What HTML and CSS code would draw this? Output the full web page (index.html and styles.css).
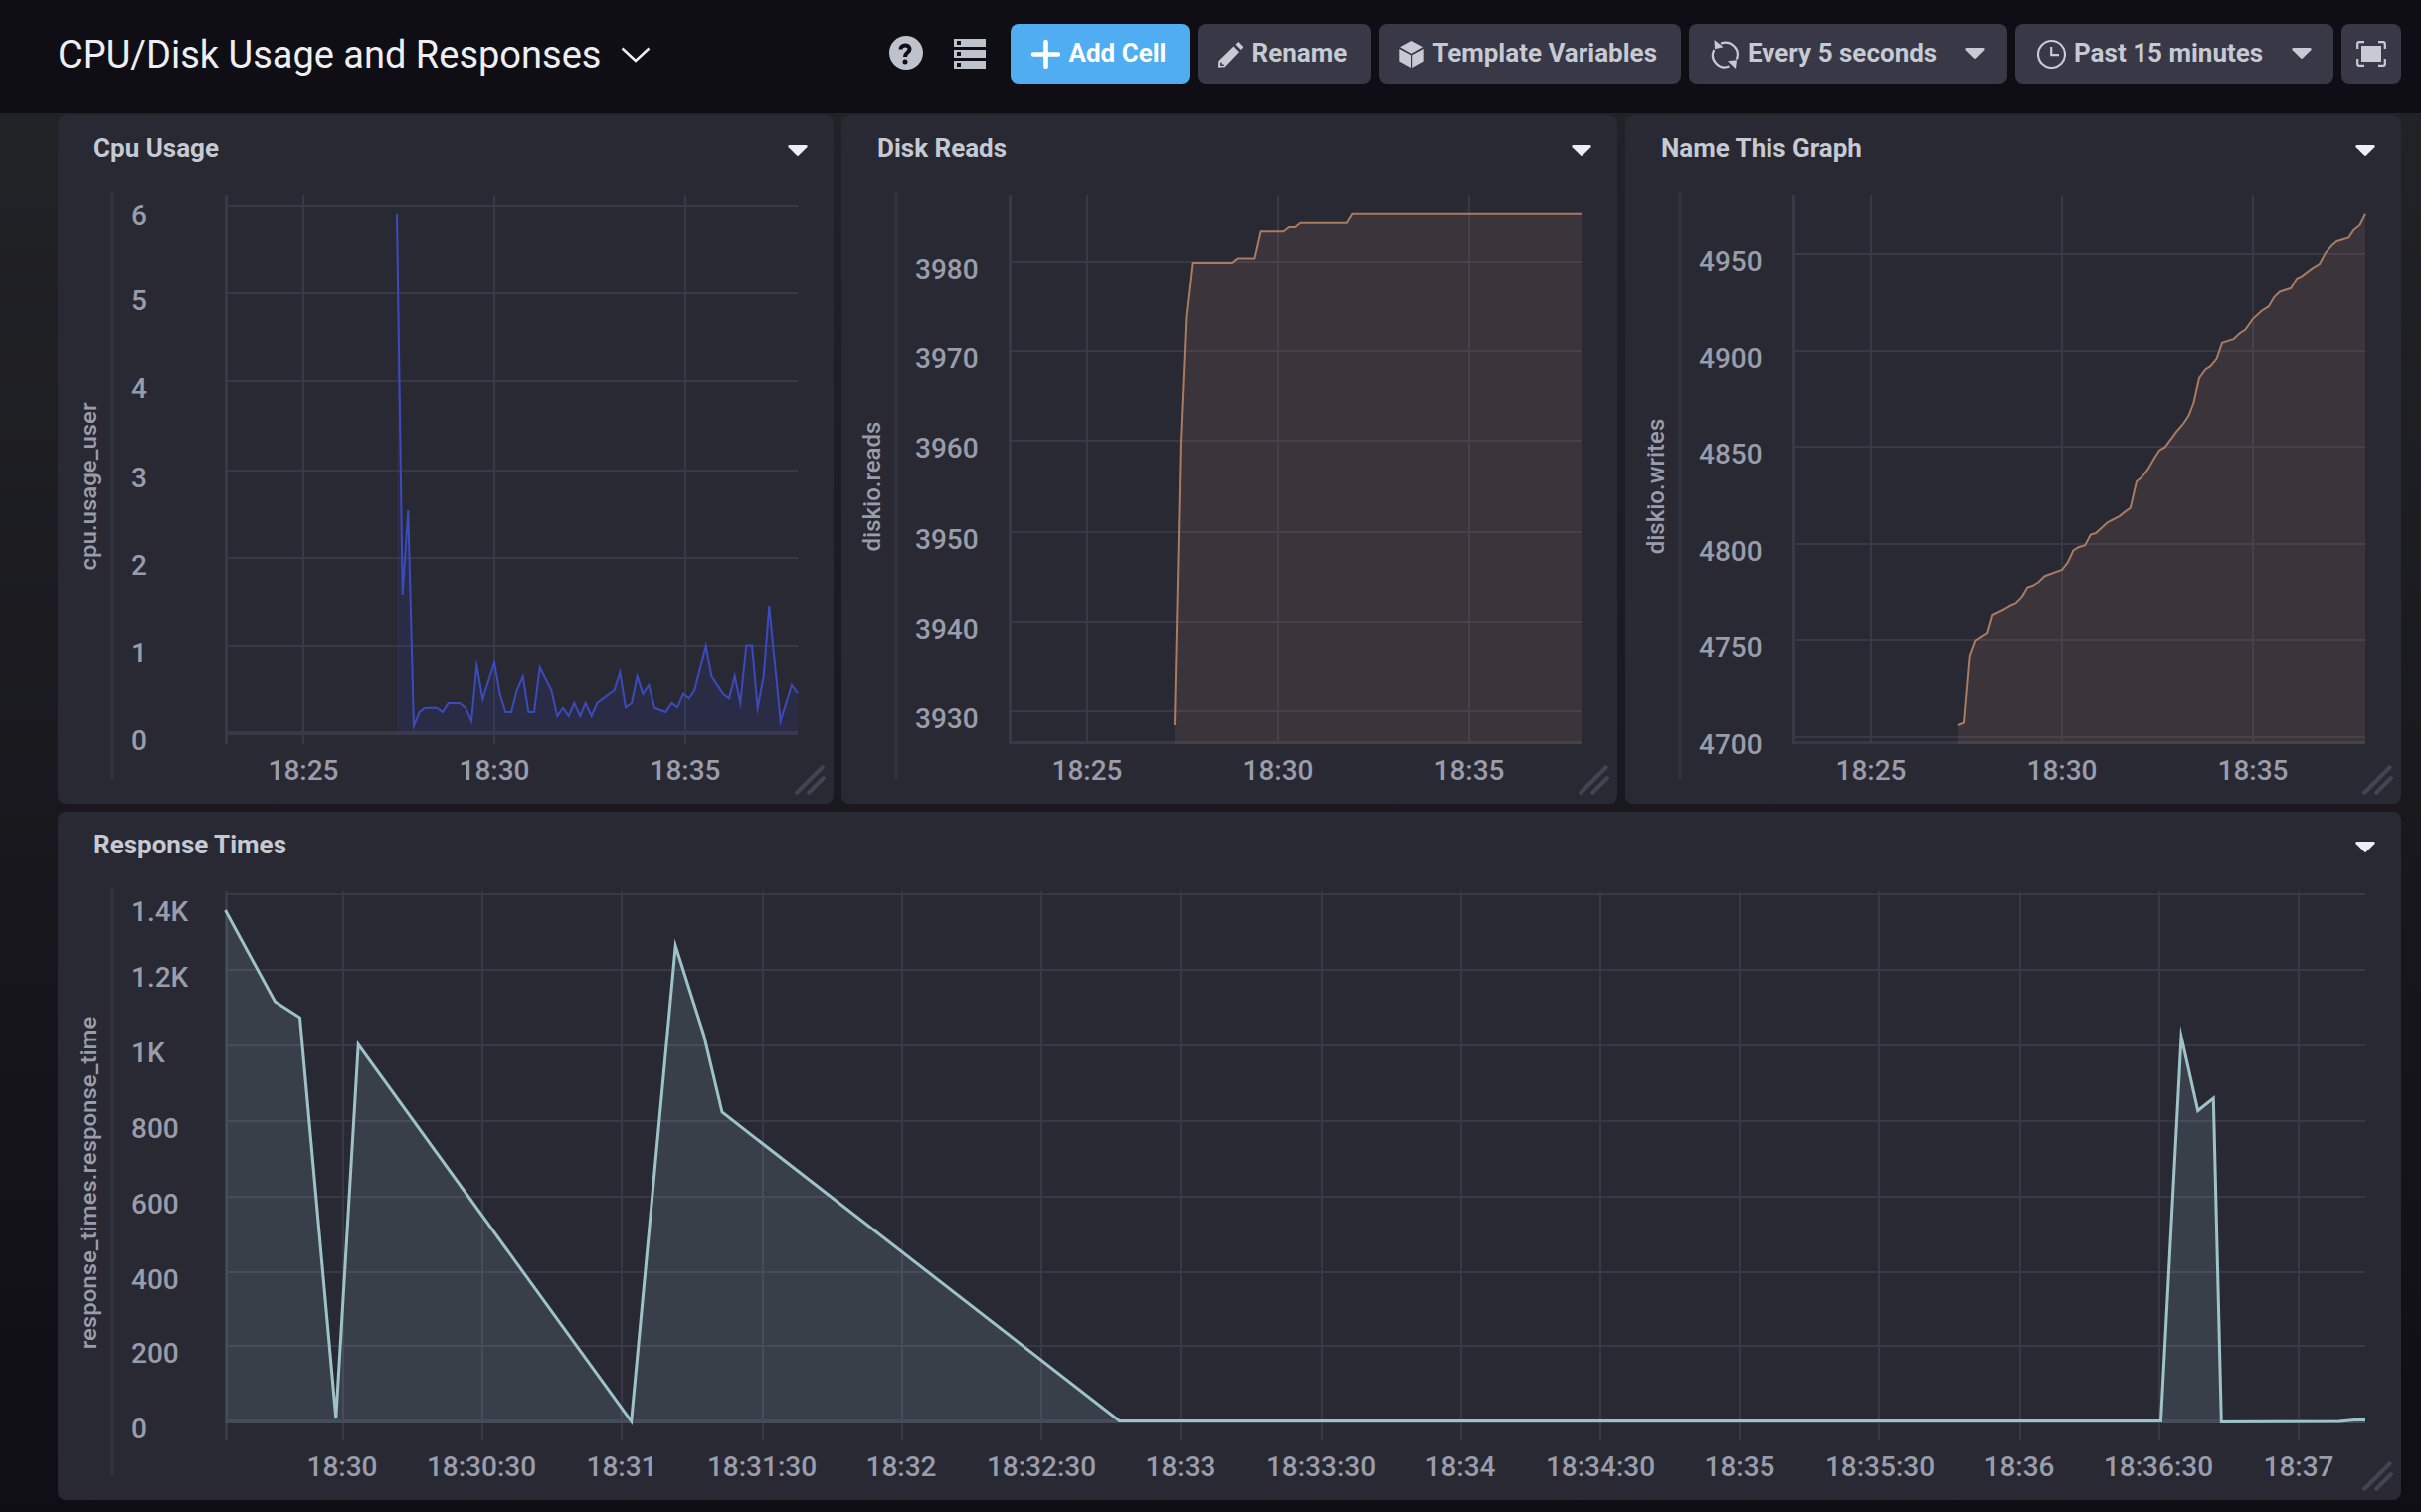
FILE: index.html
```html
<!DOCTYPE html>
<html lang="en">
<head>
<meta charset="utf-8">
<title>CPU/Disk Usage and Responses</title>
<link rel="stylesheet" href="styles.css">
</head>
<body>
<header class="page-header">
  <h1 class="dashboard-name"><button type="button" class="switcher" aria-haspopup="menu">CPU/Disk Usage and Responses
    <svg class="chevron" viewBox="0 0 30 16" aria-hidden="true"><path d="M1.500 1.500 15 14 28.500 1.500"/></svg></button></h1>
  <div class="controls">
    <button type="button" class="icon-button" aria-label="Help">
      <svg width="34" height="34" viewBox="0 0 34 34" aria-hidden="true"><circle cx="17" cy="17" r="17" fill="currentColor"/><path d="M11.500 13.600C11.500 8.200 20.500 8.200 20.500 13.200 20.500 16.700 16 16.500 16 21" fill="none" stroke="#0f0e15" stroke-width="4"/><circle cx="16" cy="26" r="2.500" fill="#0f0e15"/></svg>
    </button>
    <button type="button" class="icon-button" aria-label="Hosts">
      <svg width="32" height="30" viewBox="0 0 32 30" aria-hidden="true"><path fill="currentColor" fill-rule="evenodd" d="M0 0h32v8H0zM3 2v4h4V2zM0 11h32v8H0zM3 13v4h4v-4zM0 22h32v8H0zM3 24v4h4v-4z"/></svg>
    </button>
    <button type="button" class="button primary">
      <svg width="30" height="30" viewBox="0 0 30 30" aria-hidden="true"><path d="M15.500 3v25M3 15.500h25" stroke="currentColor" stroke-width="4.600" stroke-linecap="round"/></svg>
      <span>Add Cell</span>
    </button>
    <button type="button" class="button">
      <svg width="26" height="28" viewBox="0 0 26 28" aria-hidden="true"><path fill="currentColor" fill-rule="evenodd" d="M18.500 4.700 21.300 2l5.200 5.300L23.800 10zM16.500 6.500 22 12.300 7.700 27.300 1 27.700 1.300 21.300zM3.200 22.700V26h3.500l.1-1.600H4.800V22.500z"/></svg>
      <span>Rename</span>
    </button>
    <button type="button" class="button">
      <svg width="26" height="28" viewBox="0 0 26 28" aria-hidden="true"><path fill="currentColor" d="M13.500 1 25 7.300 13.500 13.800 2 7.300zM1.300 9 13 15.300v12.600L1.300 21.500zM25.700 9 14.200 15.300v12.600l11.500-6.400z"/></svg>
      <span>Template Variables</span>
    </button>
    <label class="dropdown">
      <svg width="30" height="30" viewBox="0 0 30 30" aria-hidden="true"><path fill="none" stroke="currentColor" stroke-width="2.200" d="M11 4.800A12 12 0 0 1 26.800 20.500M19.500 27.500A12 12 0 0 1 4.300 11"/><path fill="currentColor" d="M4.500 1 13.500 8.300 5 10.300zM18 22.300 27 21.300 26 30z"/></svg>
      <select aria-label="Refresh interval"><option>Every 5 seconds</option></select>
      <svg class="caret" width="20" height="11" viewBox="0 0 20 11" aria-hidden="true"><path d="M1.500 0h17q2 .5.800 2.200L11.200 10.300q-1.200 1.200-2.400 0L.7 2.200Q-.5.500 1.500 0z"/></svg>
    </label>
    <label class="dropdown">
      <svg width="30" height="30" viewBox="0 0 30 30" aria-hidden="true"><circle cx="15.500" cy="15.500" r="13.500" fill="none" stroke="currentColor" stroke-width="2.200"/><path fill="none" stroke="currentColor" stroke-width="2.200" d="M15.200 8V16.200H23"/></svg>
      <select aria-label="Time range"><option>Past 15 minutes</option></select>
      <svg class="caret" width="20" height="11" viewBox="0 0 20 11" aria-hidden="true"><path d="M1.500 0h17q2 .5.800 2.200L11.200 10.300q-1.200 1.200-2.400 0L.7 2.200Q-.5.500 1.500 0z"/></svg>
    </label>
    <button type="button" class="button square" aria-label="Presentation mode">
      <svg width="30" height="26" viewBox="0 0 30 26" aria-hidden="true"><path fill="currentColor" d="M5 5h20v16H5z"/><path fill="none" stroke="currentColor" stroke-width="2.200" d="M1.200 8V3Q1.200 1.200 3 1.200H8M22 1.200h5q1.800 0 1.800 1.800v5M28.800 18v5q0 1.800-1.800 1.800h-5M8 24.800H3Q1.200 24.800 1.200 23v-5"/></svg>
    </button>
  </div>
</header>

<main class="grid">
  <section class="cell">
    <div class="cell-header"><h2>Cpu Usage</h2>
      <button type="button" class="cell-menu" aria-label="Cell options"><svg class="caret" width="20" height="11" viewBox="0 0 20 11" aria-hidden="true"><path d="M1.500 0h17q2 .5.800 2.200L11.200 10.300q-1.200 1.200-2.400 0L.7 2.200Q-.5.500 1.500 0z"/></svg></button></div>
    <svg class="chart" viewBox="0 64 780 628" role="img" aria-label="Cpu Usage graph">
      <path class="divider" d="M55 77V669"/>
      <text class="axis-title" transform="translate(39 373) rotate(-90)">cpu.usage_user</text>
      <path class="gridline" d="M247 80V632M439 80V632M631 80V632M171 91H744M171 179H744M171 267H744M171 357H744M171 445H744M171 533H744"/>
      <path class="axis" d="M169.500 80V632"/><path class="axis base" d="M171 621H744"/>
      <path class="area blue" d="M341 99 346.700 482 352.300 397 358 614 363.700 600 369.300 595.700H381.300L387 600 392.700 591H404.300L410 595.700 416 609 421.300 553 427.300 587 439 550 444.700 582.300 450.300 600H456L461.700 578 467.700 564 473.300 600H479L484.700 555 496.300 578 502.300 604 508 595.700 513.700 604 519.300 591 525.300 604 530.700 591 536.700 604 542.300 591 559.700 578 565.300 560 571 595.300 577 591 582.700 564 588.300 581.700 594.300 573 600 595.700 611.300 600 617.300 591 623 595.300 629 581.700 634.700 586.300 640.300 578 651.700 533 657.300 564 669 581.700 675 586.300 680.700 564 686.300 591 692.300 532.500H698L703.700 596 709.700 564 715.300 493 726.700 609 738 573 744 581V622H341z"/>
      <path class="line blue" d="M341 99 346.700 482 352.300 397 358 614 363.700 600 369.300 595.700H381.300L387 600 392.700 591H404.300L410 595.700 416 609 421.300 553 427.300 587 439 550 444.700 582.300 450.300 600H456L461.700 578 467.700 564 473.300 600H479L484.700 555 496.300 578 502.300 604 508 595.700 513.700 604 519.300 591 525.300 604 530.700 591 536.700 604 542.300 591 559.700 578 565.300 560 571 595.300 577 591 582.700 564 588.300 581.700 594.300 573 600 595.700 611.300 600 617.300 591 623 595.300 629 581.700 634.700 586.300 640.300 578 651.700 533 657.300 564 669 581.700 675 586.300 680.700 564 686.300 591 692.300 532.500H698L703.700 596 709.700 564 715.300 493 726.700 609 738 573 744 581"/>
      <g class="y-labels"><text x="74" y="110">6</text><text x="74" y="196">5</text><text x="74" y="284">4</text><text x="74" y="374">3</text><text x="74" y="462">2</text><text x="74" y="550">1</text><text x="74" y="638">0</text></g>
      <g class="x-labels"><text x="247" y="668">18:25</text><text x="439" y="668">18:30</text><text x="631" y="668">18:35</text></g>
    </svg>
    <svg class="resize" viewBox="0 0 32 32" aria-hidden="true"><path d="M2 30 30 2M14 30 31 13"/></svg>
  </section>

  <section class="cell">
    <div class="cell-header"><h2>Disk Reads</h2>
      <button type="button" class="cell-menu" aria-label="Cell options"><svg class="caret" width="20" height="11" viewBox="0 0 20 11" aria-hidden="true"><path d="M1.500 0h17q2 .5.800 2.200L11.200 10.300q-1.200 1.200-2.400 0L.7 2.200Q-.5.500 1.500 0z"/></svg></button></div>
    <svg class="chart" viewBox="0 64 780 628" role="img" aria-label="Disk Reads graph">
      <path class="divider" d="M55 77V669"/>
      <text class="axis-title" transform="translate(39 373) rotate(-90)">diskio.reads</text>
      <path class="gridline" d="M247 80V632M439 80V632M631 80V632M171 147H744M171 237H744M171 327H744M171 419H744M171 509H744M171 599H744"/>
      <path class="axis" d="M169.500 80V632M171 630.500H744"/>
      <path class="area orange" d="M335 613 341 329 346.500 203 352.700 148H393L398.600 143.600H415.400L421.600 116.200H444.500L450 112H456.200L461.300 107.700H507.800L513.400 98.700H744V632H335z"/>
      <path class="line orange" d="M335 613 341 329 346.500 203 352.700 148H393L398.600 143.600H415.400L421.600 116.200H444.500L450 112H456.200L461.300 107.700H507.800L513.400 98.700H744"/>
      <g class="y-labels"><text x="74" y="164">3980</text><text x="74" y="254">3970</text><text x="74" y="344">3960</text><text x="74" y="436">3950</text><text x="74" y="526">3940</text><text x="74" y="616">3930</text></g>
      <g class="x-labels"><text x="247" y="668">18:25</text><text x="439" y="668">18:30</text><text x="631" y="668">18:35</text></g>
    </svg>
    <svg class="resize" viewBox="0 0 32 32" aria-hidden="true"><path d="M2 30 30 2M14 30 31 13"/></svg>
  </section>

  <section class="cell">
    <div class="cell-header"><h2>Name This Graph</h2>
      <button type="button" class="cell-menu" aria-label="Cell options"><svg class="caret" width="20" height="11" viewBox="0 0 20 11" aria-hidden="true"><path d="M1.500 0h17q2 .5.800 2.200L11.200 10.300q-1.200 1.200-2.400 0L.7 2.200Q-.5.500 1.500 0z"/></svg></button></div>
    <svg class="chart" viewBox="0 64 780 628" role="img" aria-label="Disk writes graph">
      <path class="divider" d="M55 77V669"/>
      <text class="axis-title" transform="translate(39 373) rotate(-90)">diskio.writes</text>
      <path class="gridline" d="M247 80V632M439 80V632M631 80V632M171 139H744M171 237H744M171 333H744M171 431H744M171 527H744M171 625H744"/>
      <path class="axis" d="M169.500 80V632M171 630.500H744"/>
      <path class="area orange" d="M335 613 341 610.500 346.800 542.800 352.400 527.700 364.200 520 369.300 502 379.600 497 387.800 492.200 392.400 490.500 399 483.600 404.200 474.600 409.300 473 415.500 469.300 421.600 463.200 439 457 444.700 449.700 450.400 437.500 455.500 434.200 462.200 432.200 467.800 421.600 473 420 484.700 409.300 497 402.800 503.200 397.900 507.800 394.600 514 368 519 364 525.700 355.400 532 344.400 537 336.700 542.700 333.400 554.500 317.500 560.600 310.500 566.300 302 571.400 289 577 264 583.200 255.400 588.300 252.200 594.500 244.800 600 228.900 611.400 225.200 618 219 623.200 215.800 630.900 204.800 639.600 196.700 646.800 192.200 652.400 182.800 658 177.500 669.300 173.800 675 164 680 161.600 690.900 153.400 698 149 704.200 137.500 710.900 129.700 715.500 126 727.300 122.400 732.400 114.600 738.600 109.700 744 98.700V632H335z"/>
      <path class="line orange" d="M335 613 341 610.500 346.800 542.800 352.400 527.700 364.200 520 369.300 502 379.600 497 387.800 492.200 392.400 490.500 399 483.600 404.200 474.600 409.300 473 415.500 469.300 421.600 463.200 439 457 444.700 449.700 450.400 437.500 455.500 434.200 462.200 432.200 467.800 421.600 473 420 484.700 409.300 497 402.800 503.200 397.900 507.800 394.600 514 368 519 364 525.700 355.400 532 344.400 537 336.700 542.700 333.400 554.500 317.500 560.600 310.500 566.300 302 571.400 289 577 264 583.200 255.400 588.300 252.200 594.500 244.800 600 228.900 611.400 225.200 618 219 623.200 215.800 630.900 204.800 639.600 196.700 646.800 192.200 652.400 182.800 658 177.500 669.300 173.800 675 164 680 161.600 690.900 153.400 698 149 704.200 137.500 710.900 129.700 715.500 126 727.300 122.400 732.400 114.600 738.600 109.700 744 98.700"/>
      <g class="y-labels"><text x="74" y="156">4950</text><text x="74" y="254">4900</text><text x="74" y="350">4850</text><text x="74" y="448">4800</text><text x="74" y="544">4750</text><text x="74" y="642">4700</text></g>
      <g class="x-labels"><text x="247" y="668">18:25</text><text x="439" y="668">18:30</text><text x="631" y="668">18:35</text></g>
    </svg>
    <svg class="resize" viewBox="0 0 32 32" aria-hidden="true"><path d="M2 30 30 2M14 30 31 13"/></svg>
  </section>

  <section class="cell wide">
    <div class="cell-header"><h2>Response Times</h2>
      <button type="button" class="cell-menu" aria-label="Cell options"><svg class="caret" width="20" height="11" viewBox="0 0 20 11" aria-hidden="true"><path d="M1.500 0h17q2 .5.800 2.200L11.200 10.300q-1.200 1.200-2.400 0L.7 2.200Q-.5.500 1.500 0z"/></svg></button></div>
    <svg class="chart" viewBox="0 64 2356 628" role="img" aria-label="Response Times graph">
      <path class="divider" d="M55 77V669"/>
      <text class="axis-title" transform="translate(39 373) rotate(-90)">response_times.response_time</text>
      <path class="gridline" d="M287 80V632M427 80V632M567 80V632M709 80V632M849 80V632M989 80V632M1129 80V632M1271 80V632M1411 80V632M1551 80V632M1691 80V632M1831 80V632M1973 80V632M2113 80V632M2253 80V632M171 83H2320M171 159H2320M171 235H2320M171 311H2320M171 387H2320M171 463H2320M171 537H2320"/>
      <path class="axis" d="M169.500 80V632"/><path class="axis base" d="M171 613H2320"/>
      <path class="area teal" d="M168.500 99 218.500 191 243.500 207 279.800 610 302.200 234 576.700 613 621.200 135 649.700 225 668 302 1067.500 612.500H2114.500L2135 226 2151.700 300.500 2167.300 288 2175.300 613.500 2294 613 2309 611.500H2320V615H168.500z"/>
      <path class="line teal" d="M168.500 99 218.500 191 243.500 207 279.800 610 302.200 234 576.700 613 621.200 135 649.700 225 668 302 1067.500 612.500H2114.500L2135 226 2151.700 300.500 2167.300 288 2175.300 613.500 2294 613 2309 611.500H2320"/>
      <g class="y-labels"><text x="74" y="110">1.4K</text><text x="74" y="176">1.2K</text><text x="74" y="252">1K</text><text x="74" y="328">800</text><text x="74" y="404">600</text><text x="74" y="480">400</text><text x="74" y="554">200</text><text x="74" y="630">0</text></g>
      <g class="x-labels"><text x="286" y="668">18:30</text><text x="426" y="668">18:30:30</text><text x="567" y="668">18:31</text><text x="708" y="668">18:31:30</text><text x="848" y="668">18:32</text><text x="989" y="668">18:32:30</text><text x="1129" y="668">18:33</text><text x="1270" y="668">18:33:30</text><text x="1410" y="668">18:34</text><text x="1551" y="668">18:34:30</text><text x="1691" y="668">18:35</text><text x="1832" y="668">18:35:30</text><text x="1972" y="668">18:36</text><text x="2112" y="668">18:36:30</text><text x="2253" y="668">18:37</text></g>
    </svg>
    <svg class="resize" viewBox="0 0 32 32" aria-hidden="true"><path d="M2 30 30 2M14 30 31 13"/></svg>
  </section>
</main>
</body>
</html>
```
FILE: styles.css
```css
* { box-sizing: border-box; }

body {
  margin: 0;
  min-height: 100vh;
  background: linear-gradient(#232428, #0f0e15) no-repeat #0f0e15;
  color: #c6cad3;
  font-family: Roboto, "Liberation Sans", sans-serif;
}

button, select {
  margin: 0;
  padding: 0;
  border: 0;
  background: none;
  color: inherit;
  font: inherit;
  cursor: pointer;
}

.page-header {
  display: flex;
  align-items: flex-start;
  justify-content: space-between;
  height: 114px;
  padding: 24px 20px 0 58px;
  background: #0f0e15;
}

.dashboard-name { margin: 0; font-weight: 400; }

.switcher {
  display: flex;
  align-items: center;
  gap: 20px;
  height: 62px;
  color: #eeeff2;
  font-size: 38px;
  line-height: 62px;
}

.chevron { width: 30px; height: 16px; fill: none; stroke: currentColor; stroke-width: 2.5px; }

.controls { display: flex; align-items: center; gap: 8px; }

.icon-button { display: flex; align-items: center; height: 60px; margin-right: 23px; padding-bottom: 2px; color: #bec2cc; }
.icon-button + .icon-button { margin-right: 17px; padding-bottom: 0; }

.button, .dropdown {
  display: flex;
  align-items: center;
  gap: 8px;
  height: 60px;
  padding: 0 24px 0 20px;
  border-radius: 8px;
  background: #383846;
  color: #c6cad3;
  font-size: 26px;
  font-weight: 700;
  white-space: nowrap;
}

.button span, .dropdown select { padding-bottom: 2px; }
.primary { background: #50adf2; color: #fff; }
.square { justify-content: center; width: 60px; padding: 0; }
.dropdown { width: 320px; padding: 0 22px 0 21px; }
.dropdown select { flex: 1; min-width: 0; appearance: none; }
.dropdown .caret { margin-bottom: 2px; }

.caret { display: block; fill: currentColor; }

.grid {
  display: grid;
  grid-template-columns: repeat(3, 1fr);
  gap: 8px;
  padding: 2px 20px 12px 58px;
}

.cell { position: relative; border-radius: 8px; background: #292933; }
.wide { grid-column: 1 / -1; }

.cell-header {
  display: flex;
  align-items: center;
  justify-content: space-between;
  height: 64px;
  padding: 6px 26px 0 36px;
}

.cell-header h2 { margin: 0; padding-bottom: 4px; font-size: 26px; font-weight: 700; line-height: 52px; color: #c6cad3; }
.cell-menu { color: #eeeff2; }

.chart { display: block; width: 100%; }

.divider { stroke: #31313d; stroke-width: 4px; }
.gridline { stroke: #383846; stroke-width: 2px; }
.axis { stroke: #383846; stroke-width: 3px; }
.base { stroke-width: 4px; }

.line { fill: none; stroke-width: 2px; stroke-miterlimit: 10; }
.line.blue { stroke: #3b4bbd; }
.line.orange { stroke: #a87c62; }
.line.teal { stroke: #9dc2c8; stroke-width: 3px; }
.area.blue { fill: #3344cc; fill-opacity: .13; }
.area.orange { fill: #a87c62; fill-opacity: .15; }
.area.teal { fill: #9dc2c8; fill-opacity: .15; }

.chart text { fill: #999dab; font-size: 28px; font-weight: 500; }
.x-labels text, .chart .axis-title { text-anchor: middle; }
.chart .axis-title { font-size: 24px; }

.resize {
  position: absolute;
  right: 8px;
  bottom: 8px;
  width: 32px;
  height: 32px;
  fill: none;
  stroke: #434453;
  stroke-width: 4px;
}
```
